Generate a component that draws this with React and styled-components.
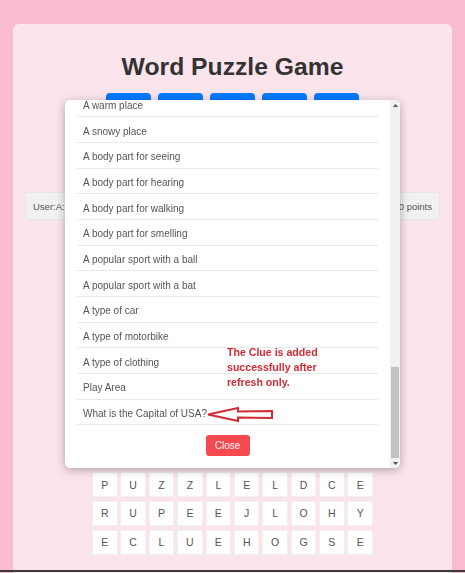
import { useLayoutEffect, useRef } from "react";
import styled, { createGlobalStyle } from "styled-components";

const GlobalStyle = createGlobalStyle`
  html, body {
    margin: 0;
    padding: 0;
    background: #f8bbd0;
    font-family: "Liberation Sans", Arial, sans-serif;
    overflow: hidden;
  }
`;

const Page = styled.div`
  height: 573px;
  padding: 24px 13px 0;
  box-sizing: border-box;
`;

const Card = styled.div`
  background: #fce4ec;
  border-radius: 6px 6px 0 0;
  height: 100%;
  padding: 28px 12px 0;
  box-sizing: border-box;
  display: flex;
  flex-direction: column;
  align-items: center;
`;

const Title = styled.h1`
  margin: 0;
  font-size: 24.7px;
  line-height: 30px;
  font-weight: 700;
  color: #333;
`;

const ButtonRow = styled.div`
  display: flex;
  gap: 7px;
  margin-top: 11px;
`;

const BlueButton = styled.button`
  width: 45px;
  height: 24px;
  border: none;
  border-radius: 4px;
  background: #007bff;
`;

const ScoreBar = styled.div`
  align-self: stretch;
  margin-top: 75px;
  height: 26px;
  display: flex;
  align-items: center;
  justify-content: space-between;
  padding: 0 7px;
  background: #f1f1f1;
  border: 1px solid #e6e6e6;
  border-radius: 3px;
  font-size: 9.5px;
  color: #555;
`;

const LetterGrid = styled.div`
  margin-top: 252px;
  display: grid;
  grid-template-columns: repeat(10, 25.6px);
  grid-auto-rows: 25px;
  column-gap: 2.8px;
  row-gap: 3.8px;
`;

const Cell = styled.div`
  background: #fff;
  border: 1px solid #f0f0f0;
  box-sizing: border-box;
  display: flex;
  align-items: center;
  justify-content: center;
  font-size: 10.5px;
  color: #555;
`;

const Modal = styled.div`
  position: fixed;
  top: 100px;
  left: 65px;
  width: 335px;
  height: 368px;
  display: flex;
  background: #fff;
  border-radius: 5px;
  box-shadow: 0 2px 10px rgba(0, 0, 0, 0.3);
  overflow: hidden;
`;

const ScrollArea = styled.div`
  flex: 1;
  overflow-y: scroll;
  padding: 12px;
  scrollbar-width: none;
  &::-webkit-scrollbar { display: none; }
`;

const Scrollbar = styled.div`
  width: 10px;
  display: flex;
  flex-direction: column;
  background: #f1f1f1;
`;

const ScrollArrow = styled.div`
  height: 10px;
  display: flex;
  align-items: center;
  justify-content: center;
`;

const ScrollTrack = styled.div`
  flex: 1;
  display: flex;
  flex-direction: column;
  justify-content: flex-end;
  padding: 0 1px;
`;

const ScrollThumb = styled.div`
  height: 91px;
  background: #c1c1c1;
`;

const ModalTitle = styled.h3`
  margin: 0 0 10px;
  font-size: 14px;
  line-height: 20px;
  color: #333;
`;

const ClueList = styled.ul`
  list-style: none;
  margin: 0;
  padding: 0;
`;

const ClueItem = styled.li`
  height: 25.67px;
  box-sizing: border-box;
  display: flex;
  align-items: center;
  padding: 3px 6px 0;
  font-size: 10px;
  color: #555;
  border-bottom: 1px solid #e8e8e8;
`;

const Footer = styled.div`
  display: flex;
  justify-content: center;
  margin-top: 10px;
`;

const CloseButton = styled.button`
  width: 44px;
  height: 21px;
  border: none;
  border-radius: 3px;
  background: #f44a4f;
  color: #fff;
  font-family: "Liberation Sans", Arial, sans-serif;
  font-size: 10px;
  padding: 0;
`;

const Note = styled.div`
  position: fixed;
  left: 227px;
  top: 345px;
  font-family: "Liberation Sans", Arial, sans-serif;
  font-weight: 700;
  font-size: 10.6px;
  line-height: 15px;
  color: #d42a35;
  width: 110px;
`;

const Arrow = styled.svg`
  position: fixed;
  left: 205px;
  top: 405px;
`;

const WindowEdge = styled.div`
  position: fixed;
  left: 0;
  right: 0;
  bottom: 1px;
  height: 2px;
  background: #3a3a3a;
`;

const earlierClues = [
  "A fruit that is red", "A fruit that is yellow", "A green vegetable", "An orange vegetable",
  "A farm animal", "A wild animal", "A pet animal", "A bird that cannot fly",
  "A sea creature", "An insect", "A type of tree", "A type of flower",
  "A color of the sky", "A color of grass", "A hot drink", "A cold drink",
  "A breakfast food", "A dessert", "A kitchen tool", "A piece of furniture",
  "A musical instrument", "A school subject", "A school supply", "A job in a hospital",
  "A job in a school", "A day of the week", "A month of the year", "A season",
  "A planet", "A shape with corners", "A round shape", "A number less than ten",
  "A type of weather", "A body of water", "A tall landform", "A means of transport",
];

const visibleClues = [
  "A warm place", "A snowy place", "A body part for seeing", "A body part for hearing",
  "A body part for walking", "A body part for smelling", "A popular sport with a ball",
  "A popular sport with a bat", "A type of car", "A type of motorbike", "A type of clothing",
  "Play Area", "What is the Capital of USA?",
];

const grid = ["PUZZLELDCE", "RUPEEJLOHY", "ECLUEHOGSE"];

const Triangle = ({ down }) => (
  <svg width="5" height="3" viewBox="0 0 5 3">
    <polygon points={down ? "0,0 5,0 2.5,3" : "2.5,0 5,3 0,3"} fill="#505050" />
  </svg>
);

export default function App() {
  const scrollRef = useRef(null);

  useLayoutEffect(() => {
    const el = scrollRef.current;
    if (el) el.scrollTop = el.scrollHeight;
  }, []);

  return (
    <>
      <GlobalStyle />
      <Page>
        <Card>
          <Title>Word Puzzle Game</Title>
          <ButtonRow>
            {[0, 1, 2, 3, 4].map((i) => (
              <BlueButton key={i} />
            ))}
          </ButtonRow>
          <ScoreBar>
            <span>User:A: Current Score</span>
            <span>Score: 0 points</span>
          </ScoreBar>
          <LetterGrid>
            {grid.join("").split("").map((ch, i) => (
              <Cell key={i}>{ch}</Cell>
            ))}
          </LetterGrid>
        </Card>
      </Page>

      <Modal>
        <ScrollArea ref={scrollRef}>
          <ModalTitle>All Clues</ModalTitle>
          <ClueList>
            {[...earlierClues, ...visibleClues].map((c, i) => (
              <ClueItem key={i}>{c}</ClueItem>
            ))}
          </ClueList>
          <Footer>
            <CloseButton>Close</CloseButton>
          </Footer>
        </ScrollArea>
        <Scrollbar>
          <ScrollArrow><Triangle /></ScrollArrow>
          <ScrollTrack><ScrollThumb /></ScrollTrack>
          <ScrollArrow><Triangle down /></ScrollArrow>
        </Scrollbar>
      </Modal>

      <Note>
        The Clue is added successfully after refresh only.
      </Note>
      <Arrow width="70" height="20" viewBox="0 0 70 20">
        <polygon
          points="3,9.5 33,3 33,6.5 67,6 67,13 33,12.5 33,16"
          fill="none"
          stroke="#d42a35"
          strokeWidth="2"
          strokeLinejoin="miter"
        />
      </Arrow>
      <WindowEdge />
    </>
  );
}
